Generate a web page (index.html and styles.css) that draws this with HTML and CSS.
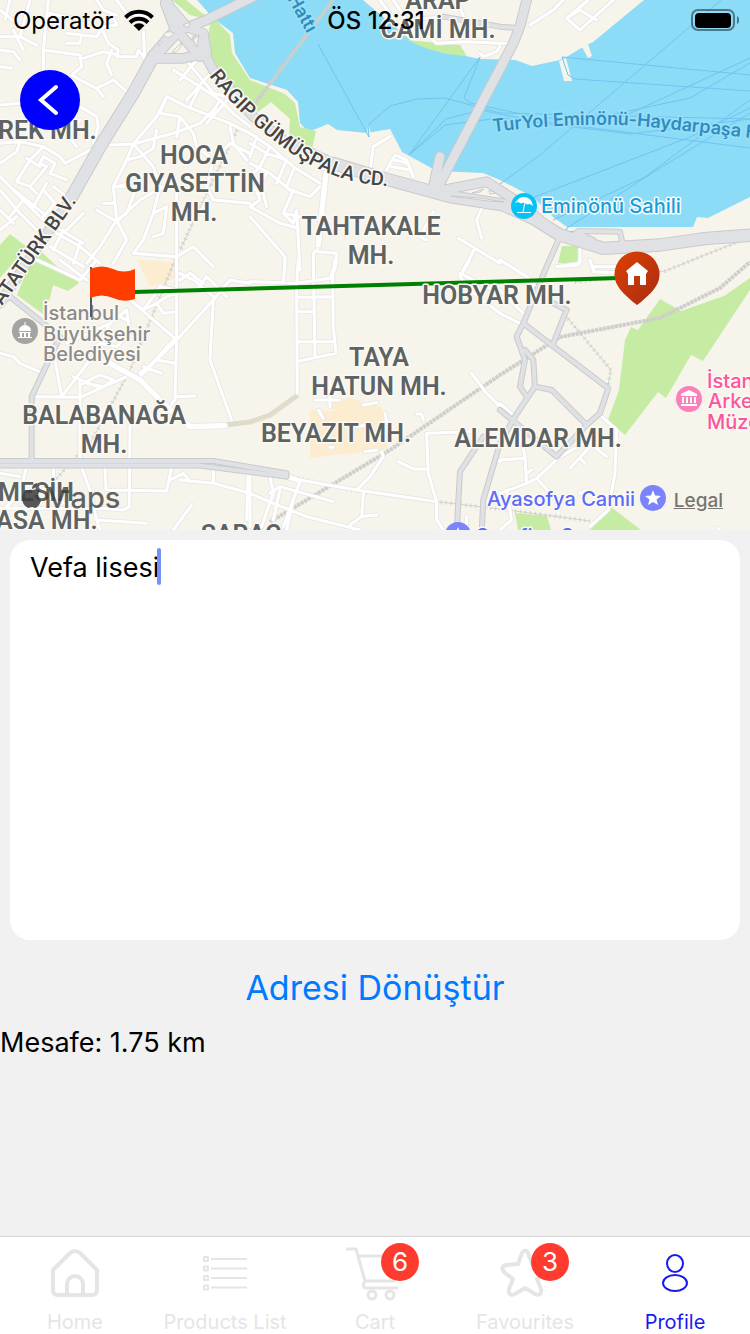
FILE: index.html
```html
<!DOCTYPE html>
<html lang="tr">
<head>
<meta charset="utf-8">
<meta name="viewport" content="width=device-width, initial-scale=1">
<title>Adres</title>
<link rel="stylesheet" href="styles.css">
</head>
<body>
<div class="screen">
  <header class="map">
    <svg class="map-art" viewBox="0 0 750 530" preserveAspectRatio="xMidYMid slice" role="img" aria-label="Harita">
      <defs>
        <g id="minor" transform="scale(.3333)">
          <!-- north west -->
          <g>
            <path d="M0 30L50 70M30 0L15 60M90 0L60 110L110 135M0 110L60 110M145 0L130 150L130 210M130 150L240 165M240 60L150 40L150 90M200 130L240 130L245 105L200 100M245 105L290 110L310 80L350 75M290 0L310 30L350 45M350 0L380 40L440 50M430 95L435 180M310 95L325 130L355 150L350 170L410 170L415 150L440 180M250 175L310 155L355 165M335 150L320 190L335 225M350 70L330 40M240 165L245 200L215 225L240 240L290 265L310 290M290 265L340 240L380 275M240 320L290 350L295 380L280 430M240 360L215 400M190 390L230 440M0 200L35 205M0 150L40 155L60 180M40 90L70 150M0 315L60 310"/>
            <path d="M0 430L60 425L130 440L180 470L195 490L280 445M0 490L50 455L60 425M50 545L90 480L130 440M50 545L90 560L140 500L120 490L130 470L165 490L150 520L200 540M80 475L120 500M0 530L60 590L130 660L250 730M90 560L110 580M140 550L100 620M30 560L130 640M0 570L60 640L110 690M0 630L40 670M0 690L50 650M70 600L30 650M130 570L165 610L130 650M160 560L200 590M170 700L240 740L300 790M150 740L250 800M190 690L160 750M240 730L220 790M250 640L200 690"/>
            <path d="M330 435L400 432L470 350L500 290L560 320L690 370L750 400M400 432L520 400L600 370L640 330M400 432L380 480L340 560L350 660L380 720M520 210L600 260L660 300L700 340L750 380M550 170L640 280M590 180L540 240M640 210L560 300M600 260L570 320M700 280L620 370M660 300L630 350M640 280L720 300M480 340L540 350L580 400L590 440M540 350L530 410M400 432L460 500L480 560L460 640L430 720L400 760L530 770M380 480L420 470L460 445L470 390M340 560L410 560L380 640L350 660M310 610L345 610M290 630L350 665L420 600L490 560M350 660L300 740L260 790M380 720L340 790M350 560L420 540M460 640L500 620L490 700L460 710M530 580L530 810M590 440L640 480L690 430L750 460M690 380L700 430L740 480M640 480L620 560L640 600L750 610M620 600L600 640M580 740L640 800M530 770L580 740M500 290L480 340"/>
          </g>
          <!-- north centre -->
          <g transform="translate(750 0)">
            <path d="M0 400L60 440L130 500L210 550M0 430L50 460L110 480M20 410L0 470M60 440L30 500L0 530M110 480L80 550M0 490L60 520L120 570L180 590L210 560M130 510L110 560M0 560L40 580L50 620M20 560L30 600L0 620M50 520L20 580M130 570L100 640L150 650M100 640L130 670L140 630L150 810M0 620L90 670L145 685M0 650L105 770L105 810M210 740L190 760L190 810M205 755L260 760L255 810"/>
            <path d="M420 410L370 440L362 500M410 510L435 465L470 480M435 480L475 490M425 500L480 510M470 480L490 530M430 0L470 60L520 95L560 130L640 125L750 130M470 60L590 50M390 0L440 70M620 0L650 70M690 160L700 170L740 155L750 140M550 635L510 710L530 720M625 715L675 745L640 810M675 745L750 790M695 625L680 660L695 715"/>
          </g>
          <!-- north east -->
          <g transform="translate(1500 0)">
            <path d="M90 75L160 30L190 0M265 0L200 55L240 90L340 0M200 55L240 30L290 60M0 130L20 130M270 780L280 810M280 800L350 800M0 780L50 810M240 740L240 790L170 800"/>
          </g>
          <!-- south west -->
          <g transform="translate(0 780)">
            <path d="M110 0L240 60L290 0M180 0L260 60M0 280L40 290L60 310L130 340M165 300L185 410L110 410M110 410L240 412L380 350M270 300L185 410M200 250L330 190L380 150L390 220L350 260L300 250L250 290M330 190L300 250M380 180L340 160M220 350L290 380M240 360L240 610L270 690L290 780L300 810M240 375L300 345L340 360L310 380L260 370M390 120L530 240L640 120L690 60L750 70M530 0L530 240L420 350L520 240M530 240L525 410L585 408M420 340L470 300L525 310M430 320L485 340M390 120L430 150L470 130L500 110L530 100M430 150L460 110L480 80L530 90M470 130L490 160L530 155M540 40L580 60L640 110M590 90L620 50L680 110M640 120L630 300L695 480M540 60L570 40L610 70M400 100L370 60M530 410L510 440M390 490L388 740L370 750L300 745L0 745M230 465L340 465M315 620L318 690L500 693L515 620M0 640L60 650M160 620L160 690L200 740M80 620L60 700L20 740M0 700L60 710M510 660L550 640L570 665M540 660L640 670L640 630M640 670L750 700M745 620L740 780M575 735L520 810M290 780L440 790"/>
          </g>
          <!-- south centre -->
          <g transform="translate(750 780)">
            <path d="M0 65L140 70L240 55L260 0M105 0L100 70M145 0L140 70L142 400M190 0L195 290M255 0L248 50L250 200L258 280L140 305M140 112L250 110M140 155L195 155M140 245L255 245M195 420L270 420M240 360L240 440M205 450L220 475M340 435L380 428M405 460L410 485M345 575L380 570M320 500L350 495M240 562L250 562M395 575L400 590L360 650L320 690L150 660L120 650M100 650L150 665L100 800M60 650L70 700L35 800M0 700L70 730L170 770L210 780L330 810M60 700L90 680L250 725M90 690L70 780M340 700L335 770L300 795M320 690L560 725M335 770L380 765M500 462L515 462L520 480M530 520L680 515M530 520L535 640L560 725L560 780L580 810M445 605L490 627L530 627M665 340L710 400L750 440M660 0L630 50L660 90L750 160M630 40L750 100M0 640L0 800M130 720L110 810M745 600L750 605M650 770L650 810"/>
          </g>
          <!-- south east -->
          <g transform="translate(1500 780)">
            <path d="M0 0L80 50L110 80M0 90L70 160M0 160L60 190M240 0L235 15L170 20M280 20L280 35L350 38M0 430L45 470M0 600L70 595M50 480L75 590L80 670L0 700M80 670L110 655L180 590L270 540M110 655L170 720L175 760M305 470L350 510L345 640L325 750L270 800M210 625L270 560M240 595L255 610M270 550L320 590M80 640L95 630M20 690L35 780L0 810M240 700L260 690M655 805L670 820"/>
          </g>
        </g>
        <g id="avenues" transform="scale(.3333)">
          <path d="M978 520L955 735M330 1090L420 1140L500 1220L570 1280L675 1277"/>
        </g>
        <g id="major" transform="scale(.3333)">
          <path class="boulevard" d="M500 10L530 90L460 170L400 280L300 440L210 600"/>
          <path class="road" d="M210 600L100 760L0 910M590 120L640 210L760 350L850 420L1000 490"/>
          <path class="boulevard" d="M1000 490L1150 535L1260 565L1350 590L1510 615L1600 655L1680 705L1810 745L1980 735L2120 715L2260 705"/>
          <path class="road" d="M760 -10L620 60L540 90L470 165M500 10L560 80L610 100L620 160L550 175L460 175M530 90L600 170"/>
          <path class="road" d="M1580 0L1560 80L1540 130L1320 550M1330 570L1460 545L1560 610L1620 660M1320 470L1300 560"/>
          <path class="street" d="M1500 80L1560 85M1720 705L1735 693L1860 695L1870 740M1330 50L1500 80M1735 700L1780 720"/>
          <path class="street" d="M0 1383L640 1383L860 1420M0 1397L600 1397L860 1430M0 910L30 890L180 1010L95 1190L95 1380M1680 710L1640 800L1570 970L1825 1165L1800 1240L1760 1275L1670 1370L1500 1230M1640 900L1700 930L1660 1030M1570 970L1550 1010L1575 1080L1560 1160L1580 1190M1575 1050L1600 1080L1605 1160L1655 1170L1760 1275M1605 1160L1545 1250L1500 1330L1450 1500L1445 1600M1450 1310L1380 1415L1370 1600"/>
        </g>
      </defs>
      <rect class="land" width="750" height="530"/>
      <path class="water" d="M197 0L213 18L233 33L235 53L250 78L287 90L298 102L300 123L308 132L328 124L337 130L367 133L390 129L402 152L437 171L483 173L500 180L533 197L553 217L567 227L693 227L697 217L708 218L750 197V0H644L593 42L583 47L568 56L560 60L532 66L515 60L480 59L437 50L413 42L363 0Z"/>
      <path class="land" d="M559 61L564 81H572L566 58ZM582 47L588 58L592 56L588 44ZM367 134L368 123L371 134Z"/>
      <path class="park" d="M172 0H186L202 13L217 21L230 35L232 53L250 80L285 94L295 103L300 127L316 131L312 149L289 137L290 119L271 102L258 112L217 68L206 45L211 20L190 15ZM10 234L27 247L0 278V245ZM36 247L60 269L79 283L68 291L53 285L50 298L43 314L17 295ZM562 246L578 246V263L558 263ZM660 299L681 311L724 296L750 278V290L703 361L691 355L666 398L658 392L625 435L608 420L619 390L625 340L631 327L638 330ZM407 40L460 45L467 56L446 54L425 48ZM515 513L547 516L551 530H518ZM611 507L641 530H590Z"/>
      <path class="campus" d="M310 410L333 411L331 402L350 398L382 407L388 449L310 458ZM137 260L175 262V278L150 287Z"/>
      <path class="trail" d="M225 425L250 422L270 415L298 395"/>
      <g class="ferry">
        <path d="M318 44L369 137M369 137L368 125L390 106L417 99L445 98L500 113L750 119M409 155L480 57L464 98L470 103L540 118L620 118L750 58M409 155L446 119L480 110L530 120L750 148M409 155L445 125L500 118L630 134L750 119M562 57L750 75M562 57L568 75L575 79L750 91M721 0L540 155L500 184M532 198L690 137L750 108M553 220L645 177L700 136L750 100M567 228L566 232L577 231M567 228L660 168L750 113M610 115L690 98L750 63"/>
      </g>
      <g class="rail">
        <path d="M333 0L250 110M175 260L130 370L92 440L55 480M237 130L180 250M270 522L390 450L500 375L560 337L660 318L720 288L750 262M283 475L355 491L440 502L500 509L590 521M565 315L611 370L607 390M575 282L665 271L750 237"/>
      </g>
      <g class="rail-ties">
        <path d="M175 260L130 370L92 440L55 480M237 130L180 250M283 475L355 491L440 502L500 509L590 521M565 315L611 370L607 390M575 282L665 271L750 237"/>
      </g>
      <path class="rail-main" d="M333 0L250 110M270 522L390 450L500 375L560 337L660 318L720 288L750 262"/>
      <use href="#minor" class="minor-edge"/>
      <use href="#minor" class="minor-fill"/>
      <use href="#avenues" class="avenue-edge"/>
      <use href="#avenues" class="avenue-fill"/>
      <use href="#major" class="major-edge"/>
      <use href="#major" class="major-fill"/>
      <path class="islands" d="M164 34Q168 30 174 33Q170 40 164 36ZM172 52L182 42Q181 50 174 53ZM183 25L190 22L188 28ZM199 35L197 47L193 40ZM159 40L162 43L159 46ZM472 193L484 189L480 192ZM489 190L496 193L490 194ZM451 196L480 198L504 202L488 201Z"/>
      <path class="route" d="M134 292L620 278"/>

      <g class="district">
        <text x="-2" y="139" class="from-left">REK MH.</text>
        <text x="194" y="164">HOCA</text>
        <text x="195" y="192">GIYASETTİN</text>
        <text x="194" y="221">MH.</text>
        <text x="371" y="235">TAHTAKALE</text>
        <text x="371" y="264">MH.</text>
        <text x="438" y="9">ARAP</text>
        <text x="438" y="38">CAMİ MH.</text>
        <text x="497" y="304">HOBYAR MH.</text>
        <text x="379" y="366">TAYA</text>
        <text x="379" y="395">HATUN MH.</text>
        <text x="104" y="424">BALABANAĞA</text>
        <text x="104" y="453">MH.</text>
        <text x="336" y="442">BEYAZIT MH.</text>
        <text x="538" y="447">ALEMDAR MH.</text>
        <text x="36" y="501">MESİH</text>
        <text x="-4" y="529" class="from-left">ASA MH.</text>
        <text x="241" y="543">SARAÇ</text>
      </g>
      <path id="ragip" d="M209 76Q244 121 291 153T390 186" fill="none"/>
      <path id="ataturk" d="M2 306L86 188" fill="none"/>
      <path id="turyol" d="M493 132Q590 120 660 128T790 142" fill="none"/>
      <path id="hatti" d="M280 -14L320 56" fill="none"/>
      <g class="street-name">
        <text><textPath href="#ragip">RAGIP GÜMÜŞPALA CD.</textPath></text>
        <text><textPath href="#ataturk">ATATÜRK BLV.</textPath></text>
      </g>
      <g class="ferry-name">
        <text><textPath href="#turyol">TurYol Eminönü-Haydarpaşa Hattı</textPath></text>
        <text><textPath href="#hatti">ş Hattı</textPath></text>
      </g>

      <g class="place coast">
        <circle cx="524" cy="206" r="13"/>
        <path class="glyph" d="M515 203Q519 196 525 197Q532 198 533 206L530 204L527 204.500L524 202.500L521 203.500L518 202ZM517 212H531V213H517Z"/>
        <path class="glyph-line" d="M526 197L523 212"/>
        <text x="541" y="213">Eminönü Sahili</text>
      </g>
      <g class="place civic">
        <circle cx="25" cy="331" r="13"/>
        <path class="glyph" d="M24.500 322H25.500V325Q31 326 31 331H19Q19 326 24.500 325ZM19 332H31V333H30V337H28V333H26V337H24V333H22V337H20V333H19ZM18 337H32V338H18Z"/>
        <text x="43" y="320">İstanbul</text>
        <text x="43" y="341">Büyükşehir</text>
        <text x="43" y="361">Belediyesi</text>
      </g>
      <g class="place museum">
        <circle cx="689" cy="399" r="13"/>
        <path class="glyph" d="M689 390L697 394V396H681V394ZM682 397H684V403H682ZM686 397H688V403H686ZM690 397H692V403H690ZM694 397H696V403H694ZM681 404H697V406H681Z"/>
        <text x="707" y="388">İstanbul</text>
        <text x="708" y="408">Arkeoloji</text>
        <text x="707" y="429">Müzesi</text>
      </g>
      <g class="place landmark">
        <circle cx="653" cy="498" r="13"/>
        <path class="glyph" d="M653 490L655 495.500L661 496L656.500 499.500L658 505L653 502L648 505L649.500 499.500L645 496L651 495.500Z"/>
        <circle cx="458" cy="535" r="13"/>
        <path class="glyph" d="M458 527L460 532H456Z"/>
        <text x="635" y="506" text-anchor="end">Ayasofya Camii</text>
        <text x="476" y="543">Serefiye Sarnıcı</text>
      </g>
      <path class="apple" d="M33 490Q37 488 40 491Q36 496 41 501Q38 508 35 508L32 507L28 508Q22 505 22 497Q24 488 33 490ZM32 489Q32 484 37 483Q37 488 32 489Z"/>
      <text class="maps" x="44" y="508">Maps</text>

      <defs>
        <linearGradient id="pin" x1="0" y1="0" x2="1" y2="1">
          <stop offset="0" stop-color="#dd4003"/><stop offset="1" stop-color="#a92c12"/>
        </linearGradient>
      </defs>
      <path class="pole" d="M91 267V317"/>
      <path class="flag" d="M90 269Q102 264 113 269T135 269V299Q124 303 113 298T90 298Z"/>
      <path fill="url(#pin)" d="M637 305L633 302C624 294 614 286 614.500 274A22.500 22.500 0 0 1 659.500 274C660 286 650 294 641 302Z"/>
      <path class="house" d="M637 262L648 271L646 274V285H640V276H634V285H628V274L626 271Z"/>
    </svg>

    <a class="legal" href="#legal">Legal</a>
    <div class="status">
      <span class="carrier">Operatör
        <svg class="wifi" viewBox="0 0 30 22" aria-hidden="true">
          <path d="M1.500 8.500A19 19 0 0 1 28.500 8.500M6 13.500A12.500 12.500 0 0 1 24 13.500" fill="none" stroke="#000" stroke-width="4"/>
          <path d="M15 22L9.500 16.500A8 8 0 0 1 20.500 16.500Z"/>
        </svg>
      </span>
      <span class="clock">ÖS 12:31</span>
      <svg class="battery" viewBox="0 0 48 22" aria-hidden="true">
        <rect x="1" y="1" width="42" height="20" rx="6" fill="none" stroke="#000" stroke-opacity=".45" stroke-width="2"/>
        <rect x="4" y="4" width="36" height="15" rx="4"/>
        <path d="M46 7Q48 8 48 11T46 15Z" opacity=".5"/>
      </svg>
    </div>
    <button class="back" type="button" aria-label="Geri">
      <svg viewBox="0 0 60 60" aria-hidden="true"><path d="M36 17L21 30L36 43" fill="none" stroke="#fff" stroke-width="4" stroke-linecap="round"/></svg>
    </button>
  </header>

  <main class="form">
    <div class="field">
      <textarea aria-label="Adres" spellcheck="false">Vefa lisesi</textarea>
      <span class="caret"></span>
    </div>
    <button class="convert" type="button">Adresi Dönüştür</button>
    <p class="distance">Mesafe: 1.75 km</p>
  </main>

  <nav class="tabs">
    <a href="#home">
      <svg class="icon" viewBox="0 0 50 50" aria-hidden="true"><path d="M3 22L20 5Q25 1 30 5L47 22V42Q47 47 42 47H8Q3 47 3 42ZM17 47V36A8 8 0 0 1 33 36V47"/></svg>
      <span>Home</span>
    </a>
    <a href="#products">
      <svg class="icon thin" viewBox="0 0 50 50" aria-hidden="true"><path d="M11 11H47M11 20.500H47M11 30H47M11 39.500H47M4 9H8V13H4ZM4 18.500H8V22.500H4ZM4 28H8V32H4ZM4 37.500H8V41.500H4Z"/></svg>
      <span>Products List</span>
    </a>
    <a href="#cart">
      <svg class="icon cart" viewBox="0 0 60 60" aria-hidden="true"><path d="M1 6H11L20 38H49L57 13H14M20 38Q16 45 22 45H53"/><circle cx="27" cy="52" r="4"/><circle cx="45" cy="52" r="4"/></svg>
      <span>Cart</span>
      <b class="badge">6</b>
    </a>
    <a href="#favourites">
      <svg class="icon" viewBox="0 0 50 50" aria-hidden="true"><path d="M22 5Q25 0 28 5L32 16L44 17Q50 19 46 24L37 31L41 41Q42 49 35 46L25 40L15 46Q8 49 9 41L13 31L4 24Q0 19 6 17L18 16Z"/></svg>
      <span>Favourites</span>
      <b class="badge">3</b>
    </a>
    <a href="#profile" class="active" aria-current="page">
      <svg class="icon thin" viewBox="0 0 50 50" aria-hidden="true"><ellipse cx="25" cy="15.500" rx="8" ry="8.500"/><ellipse cx="25" cy="35" rx="12" ry="8"/></svg>
      <span>Profile</span>
    </a>
  </nav>
</div>
</body>
</html>
```
FILE: styles.css
```css
* { box-sizing: border-box; }

body {
  margin: 0;
  background: #f1f1f1;
  color: #000;
  font-family: Inter, "Liberation Sans", sans-serif;
}

.screen {
  display: flex;
  flex-direction: column;
  min-height: 100vh;
}

/* Map */
.map { position: relative; overflow: hidden; }
.map-art { display: block; width: 100%; height: auto; }
.land { fill: #f7f4eb; }
.water { fill: #8cdcf8; }
.park { fill: #c6eca4; }
.campus { fill: #fcecd0; }
.trail { fill: none; stroke: #dfdccb; stroke-width: 5; }
.ferry { fill: none; stroke: #74c2ee; stroke-width: 1; }
.rail { fill: none; stroke: #d3d2ce; stroke-width: 1; }
.rail-ties { fill: none; stroke: #d0cfcc; stroke-width: 4; stroke-dasharray: 1 4; }
.rail-main { fill: none; stroke: #cfcecb; stroke-width: 4; stroke-dasharray: 3 1; }
.minor-edge, .minor-fill, .avenue-edge, .avenue-fill, .major-edge, .major-fill {
  fill: none;
  stroke-linecap: round;
  stroke-linejoin: round;
}
.minor-edge { stroke: #e6e6e6; stroke-width: 14; }
.minor-fill { stroke: #fff; stroke-width: 9; }
.avenue-edge { stroke: #e6e6e6; stroke-width: 21; }
.avenue-fill { stroke: #fff; stroke-width: 16; }
.major-edge { stroke: #c9cacc; --casing: 6px; }
.major-fill { stroke: #e0e1e5; --casing: 0px; }
.boulevard { stroke-width: calc(34px + var(--casing)); }
.road { stroke-width: calc(26px + var(--casing)); }
.street { stroke-width: calc(12px + var(--casing)); }
.islands { fill: #f7f4eb; stroke: #c9cacc; stroke-width: 1; }
.route { stroke: #008000; stroke-width: 4; }

.map-art text { paint-order: stroke; stroke: #fbf9f3; stroke-width: 3; stroke-linejoin: round; }
.district {
  fill: #5d6263;
  font-family: "Liberation Sans Narrow", Roboto, sans-serif;
  font-size: 25px;
  font-weight: 600;
  text-anchor: middle;
}
.district .from-left { text-anchor: start; }
.street-name { fill: #454545; font-family: Roboto, sans-serif; font-size: 20px; font-weight: 500; }
.ferry-name { fill: #2f8cc0; font-size: 18px; font-weight: 600; }
.map-art .ferry-name text { stroke: #9be0f8; }
.place { font-size: 20px; font-weight: 500; }
.glyph { fill: #fff; }
.glyph-line { stroke: #fff; stroke-width: 1; }
.coast { fill: #149fe0; }
.coast circle { fill: #06c3f5; }
.civic { fill: #8c8b89; }
.civic circle { fill: #a5a4a2; }
.museum { fill: #fb559f; }
.museum circle { fill: #fd7fba; }
.landmark { fill: #5c6cf8; }
.landmark circle { fill: #7b84fd; }
.apple { fill: #3b3b3b; opacity: .85; }
.map-art .maps { fill: #3b3b3b; fill-opacity: .8; stroke: none; font-size: 29px; font-weight: 500; }
.pole { stroke: #4b5b66; stroke-width: 2; }
.flag { fill: #ff3d00; }
.house { fill: #fff; }

.legal {
  position: absolute;
  right: 27px;
  bottom: 17px;
  color: #77756f;
  font-size: 19px;
  font-weight: 500;
  line-height: 24px;
}

/* Status bar and back button float over the map */
.status {
  position: absolute;
  inset: 0 0 auto;
  display: grid;
  grid-template-columns: 1fr auto 1fr;
  align-items: center;
  height: 40px;
  padding: 0 11px 0 13px;
  font-size: 24px;
}
.carrier { display: flex; align-items: center; gap: 10px; }
.wifi { width: 30px; height: 22px; }
.clock { font-weight: 500; }
.battery { width: 48px; height: 22px; justify-self: end; }
.back {
  position: absolute;
  top: 70px;
  left: 20px;
  width: 60px;
  height: 60px;
  padding: 0;
  border: 0;
  border-radius: 50%;
  background: #00f;
}
.back svg { display: block; width: 100%; }

/* Form */
.form { display: flex; flex: 1; flex-direction: column; }
.field { position: relative; margin: 10px; }
textarea {
  display: block;
  width: 100%;
  height: 400px;
  padding: 10px 20px;
  border: 0;
  border-radius: 20px;
  outline: 0;
  resize: none;
  background: #fff;
  color: #000;
  font: 27px/36px Inter, "Liberation Sans", sans-serif;
}
.caret {
  position: absolute;
  top: 8px;
  left: 147px;
  width: 4px;
  height: 37px;
  border-radius: 2px;
  background: #7691f5;
}
.convert {
  align-self: center;
  margin: 16px 0;
  padding: 0;
  border: 0;
  background: none;
  color: #007aff;
  font: 34px/44px Inter, "Liberation Sans", sans-serif;
}
.distance { margin: 0; font-size: 27px; line-height: 34px; }

/* Tab bar */
.tabs {
  display: grid;
  grid-template-columns: repeat(5, 1fr);
  height: 98px;
  border-top: 1px solid #d8d8d8;
  background: #fff;
}
.tabs a {
  position: relative;
  display: flex;
  flex-direction: column;
  align-items: center;
  justify-content: space-between;
  padding-top: 11px;
  color: #e5e5e5;
  font-size: 20px;
  line-height: 24px;
  text-decoration: none;
}
.tabs .active { color: #1a1aee; }
.icon {
  width: 50px;
  height: 50px;
  fill: none;
  stroke: currentColor;
  stroke-width: 4;
  stroke-linejoin: round;
}
.thin { stroke-width: 2; }
.cart { width: 60px; height: 60px; margin: -5px 0; stroke-width: 3; }
.badge {
  position: absolute;
  top: 6px;
  left: calc(50% + 6px);
  width: 38px;
  height: 38px;
  border-radius: 50%;
  background: #ff3b30;
  color: #fff;
  font-size: 26px;
  font-weight: 400;
  line-height: 38px;
  text-align: center;
}
```
